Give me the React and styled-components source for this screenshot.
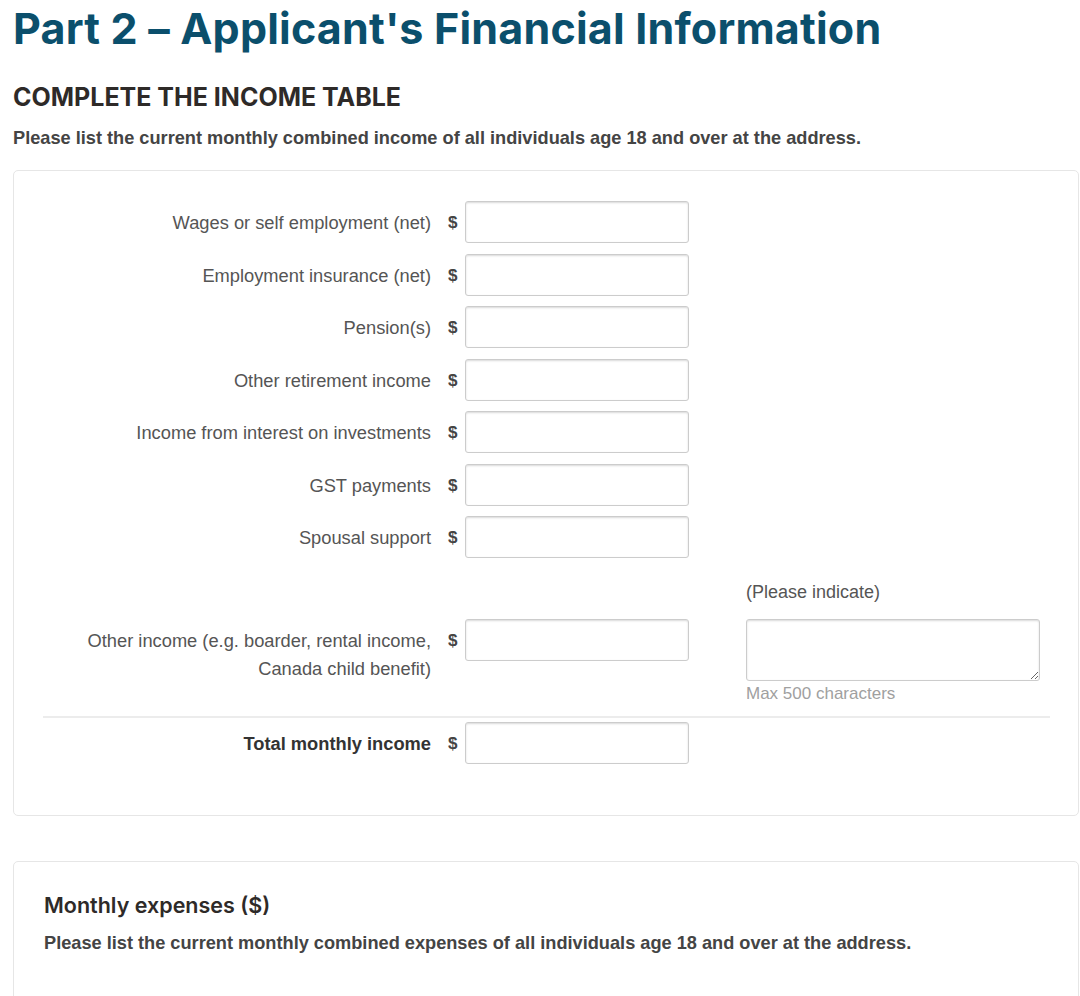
import React from 'react'
import styled, { createGlobalStyle } from 'styled-components'

const GlobalStyle = createGlobalStyle`
  body {
    margin: 0;
    background: #fff;
    font-family: "Liberation Sans", Arial, sans-serif;
  }
`

const incomeRows = [
  'Wages or self employment (net)',
  'Employment insurance (net)',
  'Pension(s)',
  'Other retirement income',
  'Income from interest on investments',
  'GST payments',
  'Spousal support',
]

const App = () => {
  return (
    <Page>
      <GlobalStyle />
      <Title>Part 2 – Applicant's Financial Information</Title>
      <SectionTitle>COMPLETE THE INCOME TABLE</SectionTitle>
      <Intro>Please list the current monthly combined income of all individuals age 18 and over at the address.</Intro>

      <Card>
        <FormGrid>
          {incomeRows.map((label) => (
            <Row key={label}>
              <Label>{label}</Label>
              <Dollar>$</Dollar>
              <Input type="text" />
            </Row>
          ))}

          <CaptionRow>
            <Caption>(Please indicate)</Caption>
          </CaptionRow>

          <Row>
            <Label>
              Other income (e.g. boarder, rental income,
              <br />
              Canada child benefit)
            </Label>
            <Dollar>$</Dollar>
            <Input type="text" />
            <Extra>
              <TextArea />
              <Hint>Max 500 characters</Hint>
            </Extra>
          </Row>

          <Divider />

          <Row>
            <Label bold>Total monthly income</Label>
            <Dollar>$</Dollar>
            <Input type="text" />
          </Row>
        </FormGrid>
      </Card>

      <Card second>
        <CardHeading>Monthly expenses ($)</CardHeading>
        <CardText>Please list the current monthly combined expenses of all individuals age 18 and over at the address.</CardText>
      </Card>
    </Page>
  )
}

export default App

const Page = styled.div`
  padding: 0 0 40px 13px;
  overflow: hidden;
`

const Title = styled.h1`
  margin: 0;
  padding-top: 1px;
  font: 700 43px/54px Inter, "Noto Sans", sans-serif;
  color: #0b4f6c;
  letter-spacing: 0.2px;
`

const SectionTitle = styled.h2`
  margin: 26px 0 0;
  font: 700 25px/32px Inter, "Noto Sans", sans-serif;
  color: #2e2a28;
`

const Intro = styled.p`
  margin: 15px 0 0;
  font: 700 18.2px/20px "Liberation Sans", Arial, sans-serif;
  color: #444;
`

const Card = styled.div`
  margin-top: ${(p) => (p.second ? '45px' : '22px')};
  width: 1066px;
  box-sizing: border-box;
  border: 1px solid #e6e6e6;
  border-radius: 5px;
  padding: ${(p) => (p.second ? '30px 30px 80px' : '30px 29px 40px')};
`

const FormGrid = styled.div`
  display: flex;
  flex-direction: column;
`

const Row = styled.div`
  display: grid;
  grid-template-columns: 388px 34px 224px 57px 294px;
  align-items: start;
  margin-bottom: 10.5px;
`

const Label = styled.label`
  grid-column: 1;
  text-align: right;
  padding-top: 8px;
  font: ${(p) => (p.bold ? 700 : 400)} 18.3px/28px "Liberation Sans", Arial, sans-serif;
  color: ${(p) => (p.bold ? '#333' : '#555')};
`

const Dollar = styled.span`
  grid-column: 2;
  padding-top: 8px;
  padding-left: 17px;
  font: 700 17px/28px "Liberation Sans", Arial, sans-serif;
  color: #444;
`

const Input = styled.input`
  grid-column: 3;
  box-sizing: border-box;
  width: 224px;
  height: 42px;
  margin: 0;
  border: 1px solid #ccc;
  border-radius: 3px;
  box-shadow: inset 0 1px 2px rgba(0, 0, 0, 0.15);
  background: #fff;
  padding: 6px 10px;
  font: 400 16px "Liberation Sans", Arial, sans-serif;
`

const CaptionRow = styled.div`
  padding-left: 703px;
  margin-top: 13px;
  margin-bottom: 17px;
`

const Caption = styled.div`
  font: 400 18px/20px "Liberation Sans", Arial, sans-serif;
  color: #555;
`

const Extra = styled.div`
  grid-column: 5;
  display: flex;
  flex-direction: column;
`

const TextArea = styled.textarea`
  box-sizing: border-box;
  width: 294px;
  height: 62px;
  margin: 0;
  border: 1px solid #ccc;
  border-radius: 3px;
  box-shadow: inset 0 1px 2px rgba(0, 0, 0, 0.15);
  resize: vertical;
  display: block;
`

const Hint = styled.div`
  margin-top: 3px;
  font: 400 17px/20px "Liberation Sans", Arial, sans-serif;
  color: #a0a0a0;
`

const Divider = styled.hr`
  margin: 2px 0 4px;
  width: 1007px;
  border: 0;
  border-top: 2px solid #ececec;
`

const CardHeading = styled.h3`
  margin: -2px 0 0;
  font: 600 21.5px/30px Inter, "Noto Sans", sans-serif;
  color: #2e2a28;
`

const CardText = styled.p`
  margin: 13px 0 0;
  font: 700 18.2px/20px "Liberation Sans", Arial, sans-serif;
  color: #444;
`
